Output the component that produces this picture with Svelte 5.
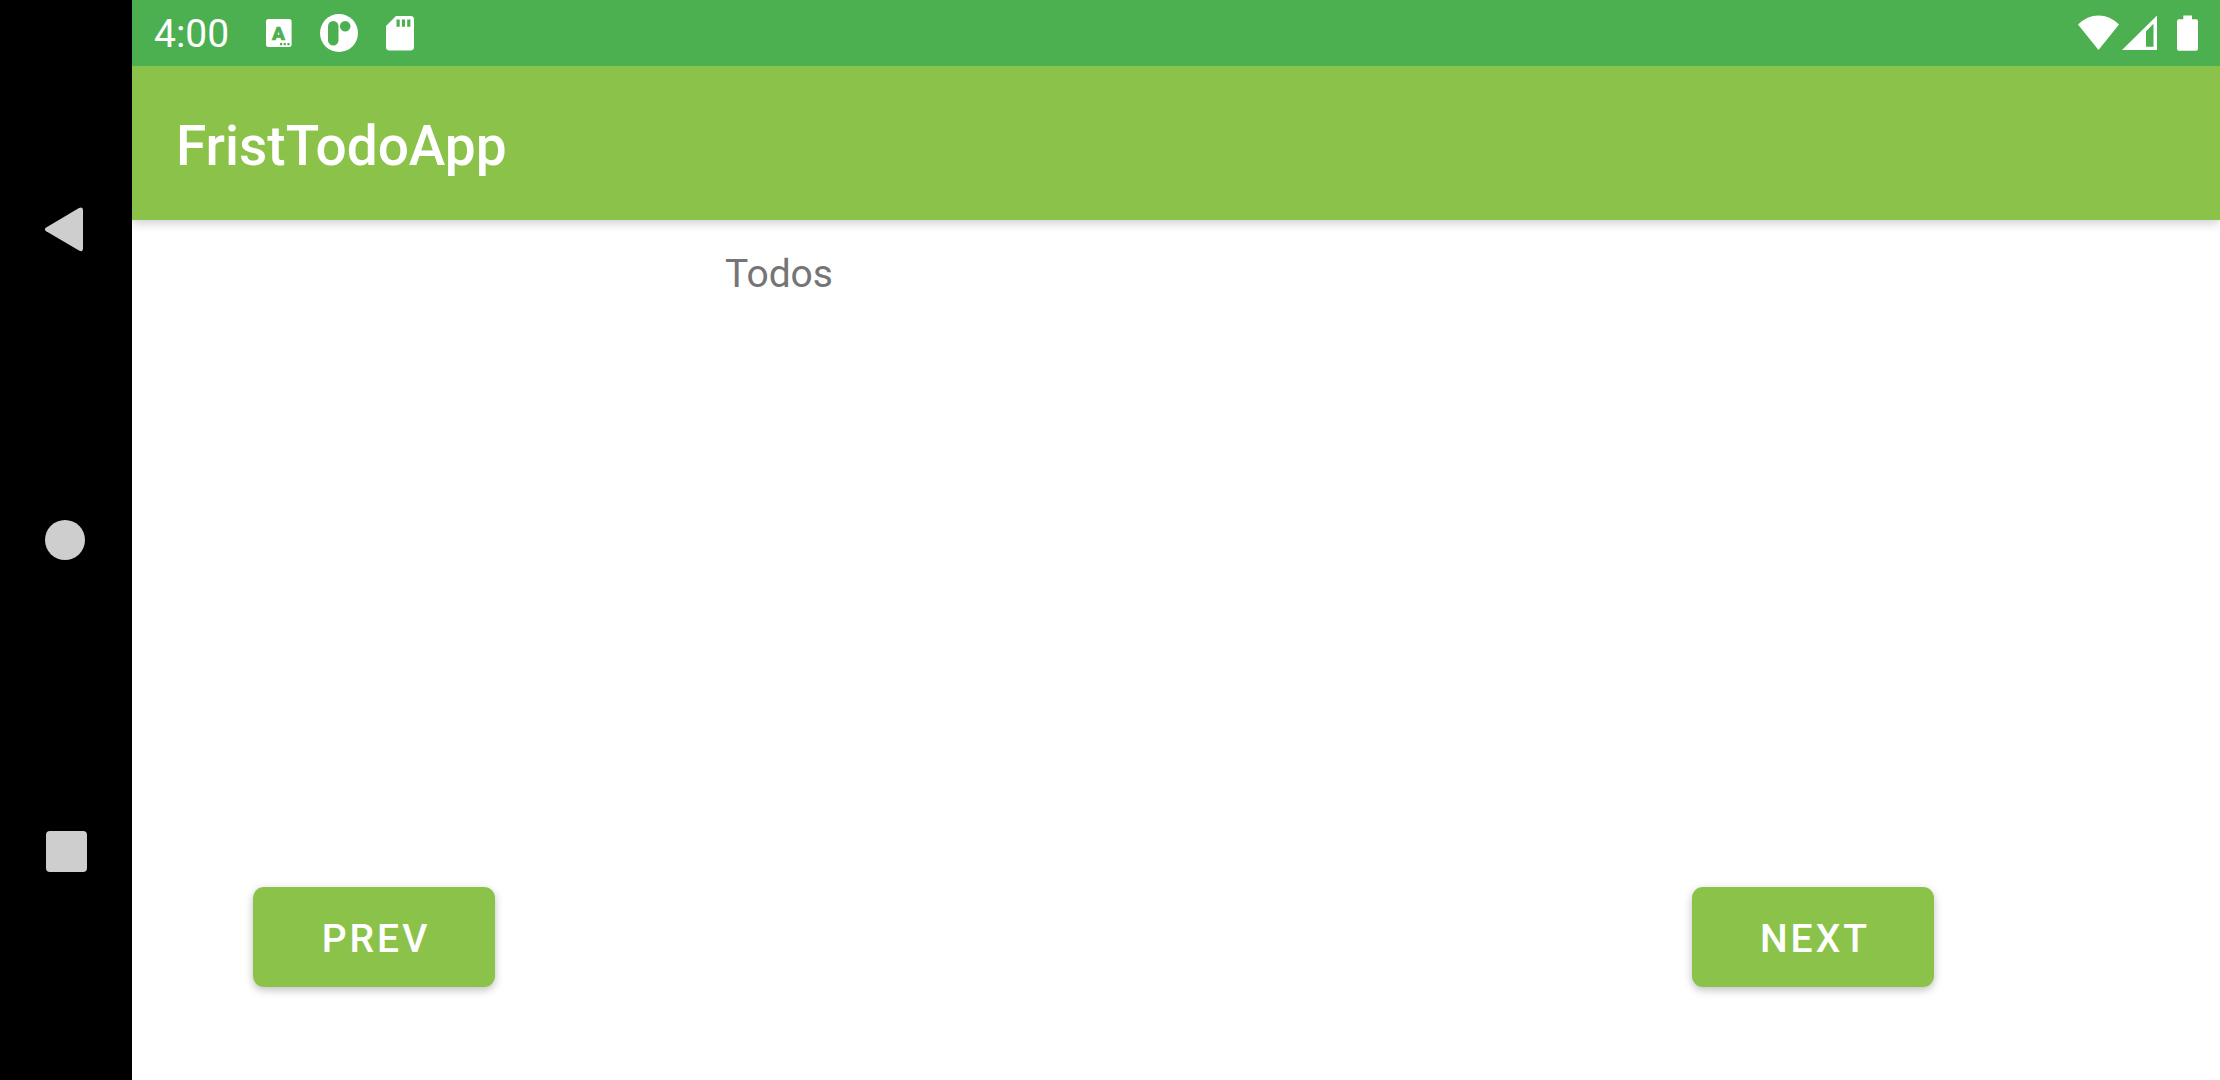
<script>
  const title = 'FristTodoApp';
  const heading = 'Todos';
</script>

<div class="screen">
  <nav class="system-nav" aria-label="System navigation">
    <button type="button" aria-label="Back">
      <svg width="44" height="48" viewBox="0 0 44 48">
        <path d="M3.2 22.6 36 3Q40 1.2 40 5V43.6Q40 47.4 36 45.6L3.2 26.2Q.4 24.4 3.2 22.6Z" />
      </svg>
    </button>
    <button type="button" aria-label="Home">
      <svg width="44" height="44" viewBox="0 0 44 44"><circle cx="22" cy="22" r="20" /></svg>
    </button>
    <button type="button" aria-label="Recent apps">
      <svg width="44" height="44" viewBox="0 0 44 44"><rect x="3" y="2" width="41" height="41" rx="4" /></svg>
    </button>
  </nav>

  <div class="app">
    <div class="status-bar">
      <time>4:00</time>
      <div class="notifications">
        <svg width="26" height="28" viewBox="0 0 26 28" role="img" aria-label="Keyboard">
          <rect width="25.6" height="28" rx="2.5" />
          <text class="glyph" x="12.6" y="20.8" text-anchor="middle">A</text>
          <path class="cut" d="M14 24h2.2v2.2H14zM17.7 24h2.2v2.2h-2.2zM21.4 24h2.2v2.2h-2.2z" />
        </svg>
        <svg width="38" height="38" viewBox="0 0 38 38" role="img" aria-label="App notification">
          <circle cx="19" cy="19" r="19" />
          <rect class="cut" x="8" y="7" width="10.5" height="24.5" rx="5.2" />
          <circle class="cut" cx="25.2" cy="12.3" r="5.3" />
        </svg>
        <svg width="28" height="36" viewBox="0 0 28 36" role="img" aria-label="Storage card">
          <path d="M10 1H24.6Q28 1 28 4.4V32Q28 35.4 24.6 35.4H3.4Q0 35.4 0 32V11Z" />
          <path class="cut" d="M10.5 4.5h3.2v7.3h-3.2zM15.9 4.5h3.2v7.3h-3.2zM21.2 4.5h3.2v7.3h-3.2z" />
        </svg>
      </div>
      <div class="indicators">
        <svg width="41" height="36" viewBox="0 0 41 36" role="img" aria-label="Wi-Fi">
          <path d="M20.5 35 0 9.6Q9 .5 20.5.5T41 9.6Z" />
        </svg>
        <svg class="signal" width="35" height="36" viewBox="0 0 35 36" role="img" aria-label="Mobile signal">
          <path fill-rule="evenodd" d="M35 .5V35H0ZM31.5 8.8 24 16.3V31.7H31.5Z" />
        </svg>
        <svg width="21" height="36" viewBox="0 0 21 36" role="img" aria-label="Battery">
          <path d="M6.3.5H15V4.2H19Q21 4.2 21 6.2V33.8Q21 35.8 19 35.8H2Q0 35.8 0 33.8V6.2Q0 4.2 2 4.2H6.3Z" />
        </svg>
      </div>
    </div>

    <header><h1>{title}</h1></header>

    <main>
      <h2>{heading}</h2>
      <div class="actions">
        <button type="button">PREV</button>
        <button type="button">NEXT</button>
      </div>
    </main>
  </div>
</div>

<style>
  :global(body) {
    margin: 0;
    background: #fff;
  }

  .screen {
    display: flex;
    min-height: 100vh;
    font-family: Roboto, sans-serif;
  }

  svg {
    display: block;
    flex: none;
    fill: #fff;
  }

  .system-nav {
    position: relative;
    z-index: 2;
    box-sizing: border-box;
    display: flex;
    flex-direction: column;
    flex: none;
    width: 132px;
    padding: 73px 0 74px;
    background: #000;
  }

  .system-nav button {
    display: flex;
    flex: 1;
    align-items: center;
    padding: 0 0 0 43px;
    border: 0;
    background: none;
  }

  .system-nav svg {
    fill: #cecece;
  }

  .app {
    display: flex;
    flex: 1;
    flex-direction: column;
    min-width: 0;
  }

  .status-bar {
    position: relative;
    z-index: 1;
    display: flex;
    align-items: center;
    height: 66px;
    padding: 0 22px;
    background: #4caf50;
    color: #fff;
  }

  time {
    padding-top: 2px;
    font-size: 39px;
    line-height: 48px;
  }

  .notifications {
    display: flex;
    align-items: center;
    gap: 28px;
    margin-left: 37px;
  }

  .glyph {
    fill: #4caf50;
    stroke: #4caf50;
    stroke-width: 0.6;
    font-size: 19px;
    font-weight: 900;
  }

  .cut {
    fill: #4caf50;
  }

  .indicators {
    display: flex;
    gap: 3px;
    margin-left: auto;
  }

  .signal {
    margin-right: 17px;
  }

  header {
    position: relative;
    box-sizing: border-box;
    display: flex;
    align-items: center;
    height: 154px;
    padding: 6px 44px 0;
    background: #8bc34a;
    box-shadow: 0 3px 10px rgba(0, 0, 0, 0.2);
    color: #fff;
  }

  h1 {
    margin: 0;
    font-size: 55px;
    font-weight: 500;
    line-height: 64px;
  }

  main {
    display: flex;
    flex: 1;
    flex-direction: column;
    justify-content: space-between;
    padding: 28px 286px 93px 121px;
    background: #fff;
  }

  h2 {
    margin: 0 0 0 472px;
    color: #757575;
    font-size: 39px;
    font-weight: 400;
    line-height: 52px;
  }

  .actions {
    display: flex;
    justify-content: space-between;
  }

  .actions button {
    width: 242px;
    height: 100px;
    padding: 3px 0 0 4px;
    border: 0;
    border-radius: 11px;
    background: #8bc34a;
    box-shadow: 0 3px 8px rgba(0, 0, 0, 0.25);
    color: #fff;
    font: 500 39px/48px Roboto, sans-serif;
    letter-spacing: 3px;
  }
</style>
